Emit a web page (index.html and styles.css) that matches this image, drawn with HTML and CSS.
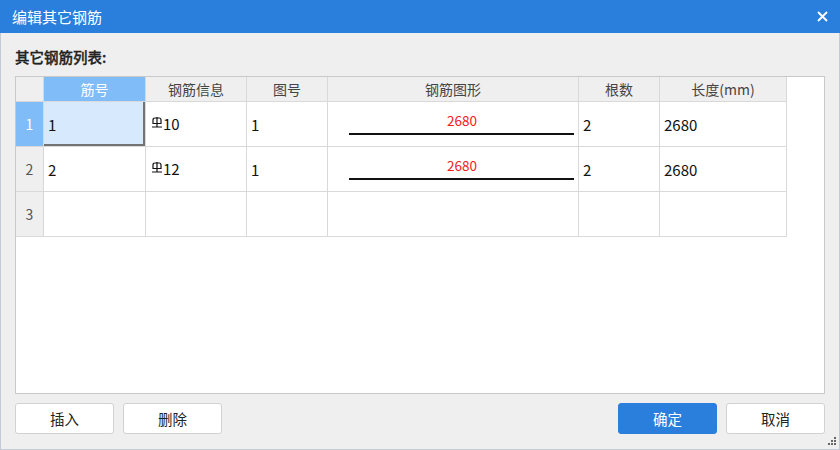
FILE: index.html
```html
<!DOCTYPE html>
<html lang="zh-cn">
<head>
    <meta charset="UTF-8">
    <title>编辑其它钢筋</title>
    <link rel="stylesheet" href="styles.css">
</head>
<body>
    <div class="dialog">
        <div class="titlebar">
            <span class="title">编辑其它钢筋</span>
            <svg class="close" width="11" height="11" viewBox="0 0 11 11">
                <path d="M1 1 L10 10 M10 1 L1 10" stroke="#fff" stroke-width="1.8"/>
            </svg>
        </div>
        <div class="content">
            <div class="list-label">其它钢筋列表:</div>
            <div class="grid">
                <div class="rows">
                    <div class="cell corner"></div>
                    <div class="cell head active">筋号</div>
                    <div class="cell head">钢筋信息</div>
                    <div class="cell head">图号</div>
                    <div class="cell head">钢筋图形</div>
                    <div class="cell head">根数</div>
                    <div class="cell head">长度(mm)</div>

                    <div class="cell rowno active">1</div>
                    <div class="cell selected">1</div>
                    <div class="cell info"><svg class="bar" width="10" height="11" viewBox="0 0 10 11"><path d="M1 6.5 V3 Q1 1 3 1 H7 Q9 1 9 3 V6.5 Z M5 0 V10 M0 10 H10" fill="none" stroke="#111" stroke-width="1.2"/></svg>10</div>
                    <div class="cell">1</div>
                    <div class="cell shape"><span class="dim">2680</span><span class="line"></span></div>
                    <div class="cell">2</div>
                    <div class="cell">2680</div>

                    <div class="cell rowno">2</div>
                    <div class="cell">2</div>
                    <div class="cell info"><svg class="bar" width="10" height="11" viewBox="0 0 10 11"><path d="M1 6.5 V3 Q1 1 3 1 H7 Q9 1 9 3 V6.5 Z M5 0 V10 M0 10 H10" fill="none" stroke="#111" stroke-width="1.2"/></svg>12</div>
                    <div class="cell">1</div>
                    <div class="cell shape"><span class="dim">2680</span><span class="line"></span></div>
                    <div class="cell">2</div>
                    <div class="cell">2680</div>

                    <div class="cell rowno">3</div>
                    <div class="cell"></div>
                    <div class="cell"></div>
                    <div class="cell"></div>
                    <div class="cell"></div>
                    <div class="cell"></div>
                    <div class="cell"></div>
                </div>
            </div>
            <div class="buttons">
                <button class="btn">插入</button>
                <button class="btn">删除</button>
                <span class="spacer"></span>
                <button class="btn primary">确定</button>
                <button class="btn">取消</button>
            </div>
        </div>
        <svg class="grip" width="10" height="10" viewBox="0 0 10 10">
            <rect x="7" y="1" width="2" height="2" fill="#666"/>
            <rect x="4" y="4" width="2" height="2" fill="#666"/>
            <rect x="7" y="4" width="2" height="2" fill="#666"/>
            <rect x="1" y="7" width="2" height="2" fill="#666"/>
            <rect x="4" y="7" width="2" height="2" fill="#666"/>
            <rect x="7" y="7" width="2" height="2" fill="#666"/>
        </svg>
    </div>
</body>
</html>
```

FILE: styles.css
```css
body {
    margin: 0;
    font-family: "Noto Sans CJK SC", "Liberation Sans", sans-serif;
    background: #efefef;
}
.dialog {
    position: relative;
    width: 840px;
    height: 450px;
    box-sizing: border-box;
    border: 1px solid #c3cbd6;
    border-top: none;
    background: #efefef;
    display: flex;
    flex-direction: column;
}
.titlebar {
    height: 33px;
    margin: 0 -1px;
    background: #2b7fdc;
    color: #fff;
    font-size: 15px;
    display: flex;
    align-items: center;
    justify-content: space-between;
    padding: 0 12px 0 12px;
}
.title {
    padding-bottom: 1px;
}
.content {
    padding: 0 14px;
    display: flex;
    flex-direction: column;
}
.list-label {
    font-size: 14.5px;
    color: #222;
    font-weight: 500;
    -webkit-text-stroke: 0.3px #222;
    line-height: 20px;
    padding-top: 14px;
    margin-bottom: 9px;
}
.grid {
    height: 318px;
    box-sizing: border-box;
    border: 1px solid #c9c9c9;
    background: #fff;
}
.rows {
    display: grid;
    grid-template-columns: 28px 102px 101px 81px 251px 81px 127px;
    grid-template-rows: 25px 45px 45px 45px;
    width: 771px;
}
.cell {
    box-sizing: border-box;
    border-right: 1px solid #d9d9d9;
    border-bottom: 1px solid #d9d9d9;
    font-size: 15px;
    color: #111;
    display: flex;
    align-items: center;
    padding-left: 4px;
}
.corner {
    background: #efefef;
}
.head {
    background: #efefef;
    color: #444;
    font-size: 14px;
    justify-content: center;
    padding-left: 0;
}
.rowno {
    background: #efefef;
    color: #555;
    font-size: 14px;
    justify-content: center;
    padding-left: 0;
}
.head.active, .rowno.active {
    background: #80bdf8;
    color: #fff;
}
.selected {
    background: #d6e9fd;
    box-shadow: inset -2px -2px 0 #737373;
}
.info {
    align-items: flex-start;
    padding-top: 11px;
    padding-left: 6px;
}
.bar {
    margin-top: 4px;
    margin-right: 1px;
}
.shape {
    flex-direction: column;
    align-items: center;
    justify-content: center;
    padding-left: 0;
}
.dim {
    color: #f02020;
    font-size: 13.5px;
    line-height: 15px;
    margin-left: 18px;
}
.line {
    width: 225px;
    height: 2px;
    background: #111;
    margin-top: 5px;
    margin-left: 16px;
}
.buttons {
    display: flex;
    gap: 9px;
    margin-top: 9px;
}
.spacer {
    flex: 1;
}
.btn {
    width: 99px;
    height: 31px;
    border: 1px solid #d2d2d2;
    border-radius: 3px;
    background: #fff;
    color: #222;
    font-family: "Noto Sans CJK SC", "Liberation Sans", sans-serif;
    font-size: 14.5px;
}
.btn.primary {
    background: #2b7fdc;
    border-color: #2b7fdc;
    color: #fff;
}
.grip {
    position: absolute;
    right: 2px;
    bottom: 3px;
}
```
